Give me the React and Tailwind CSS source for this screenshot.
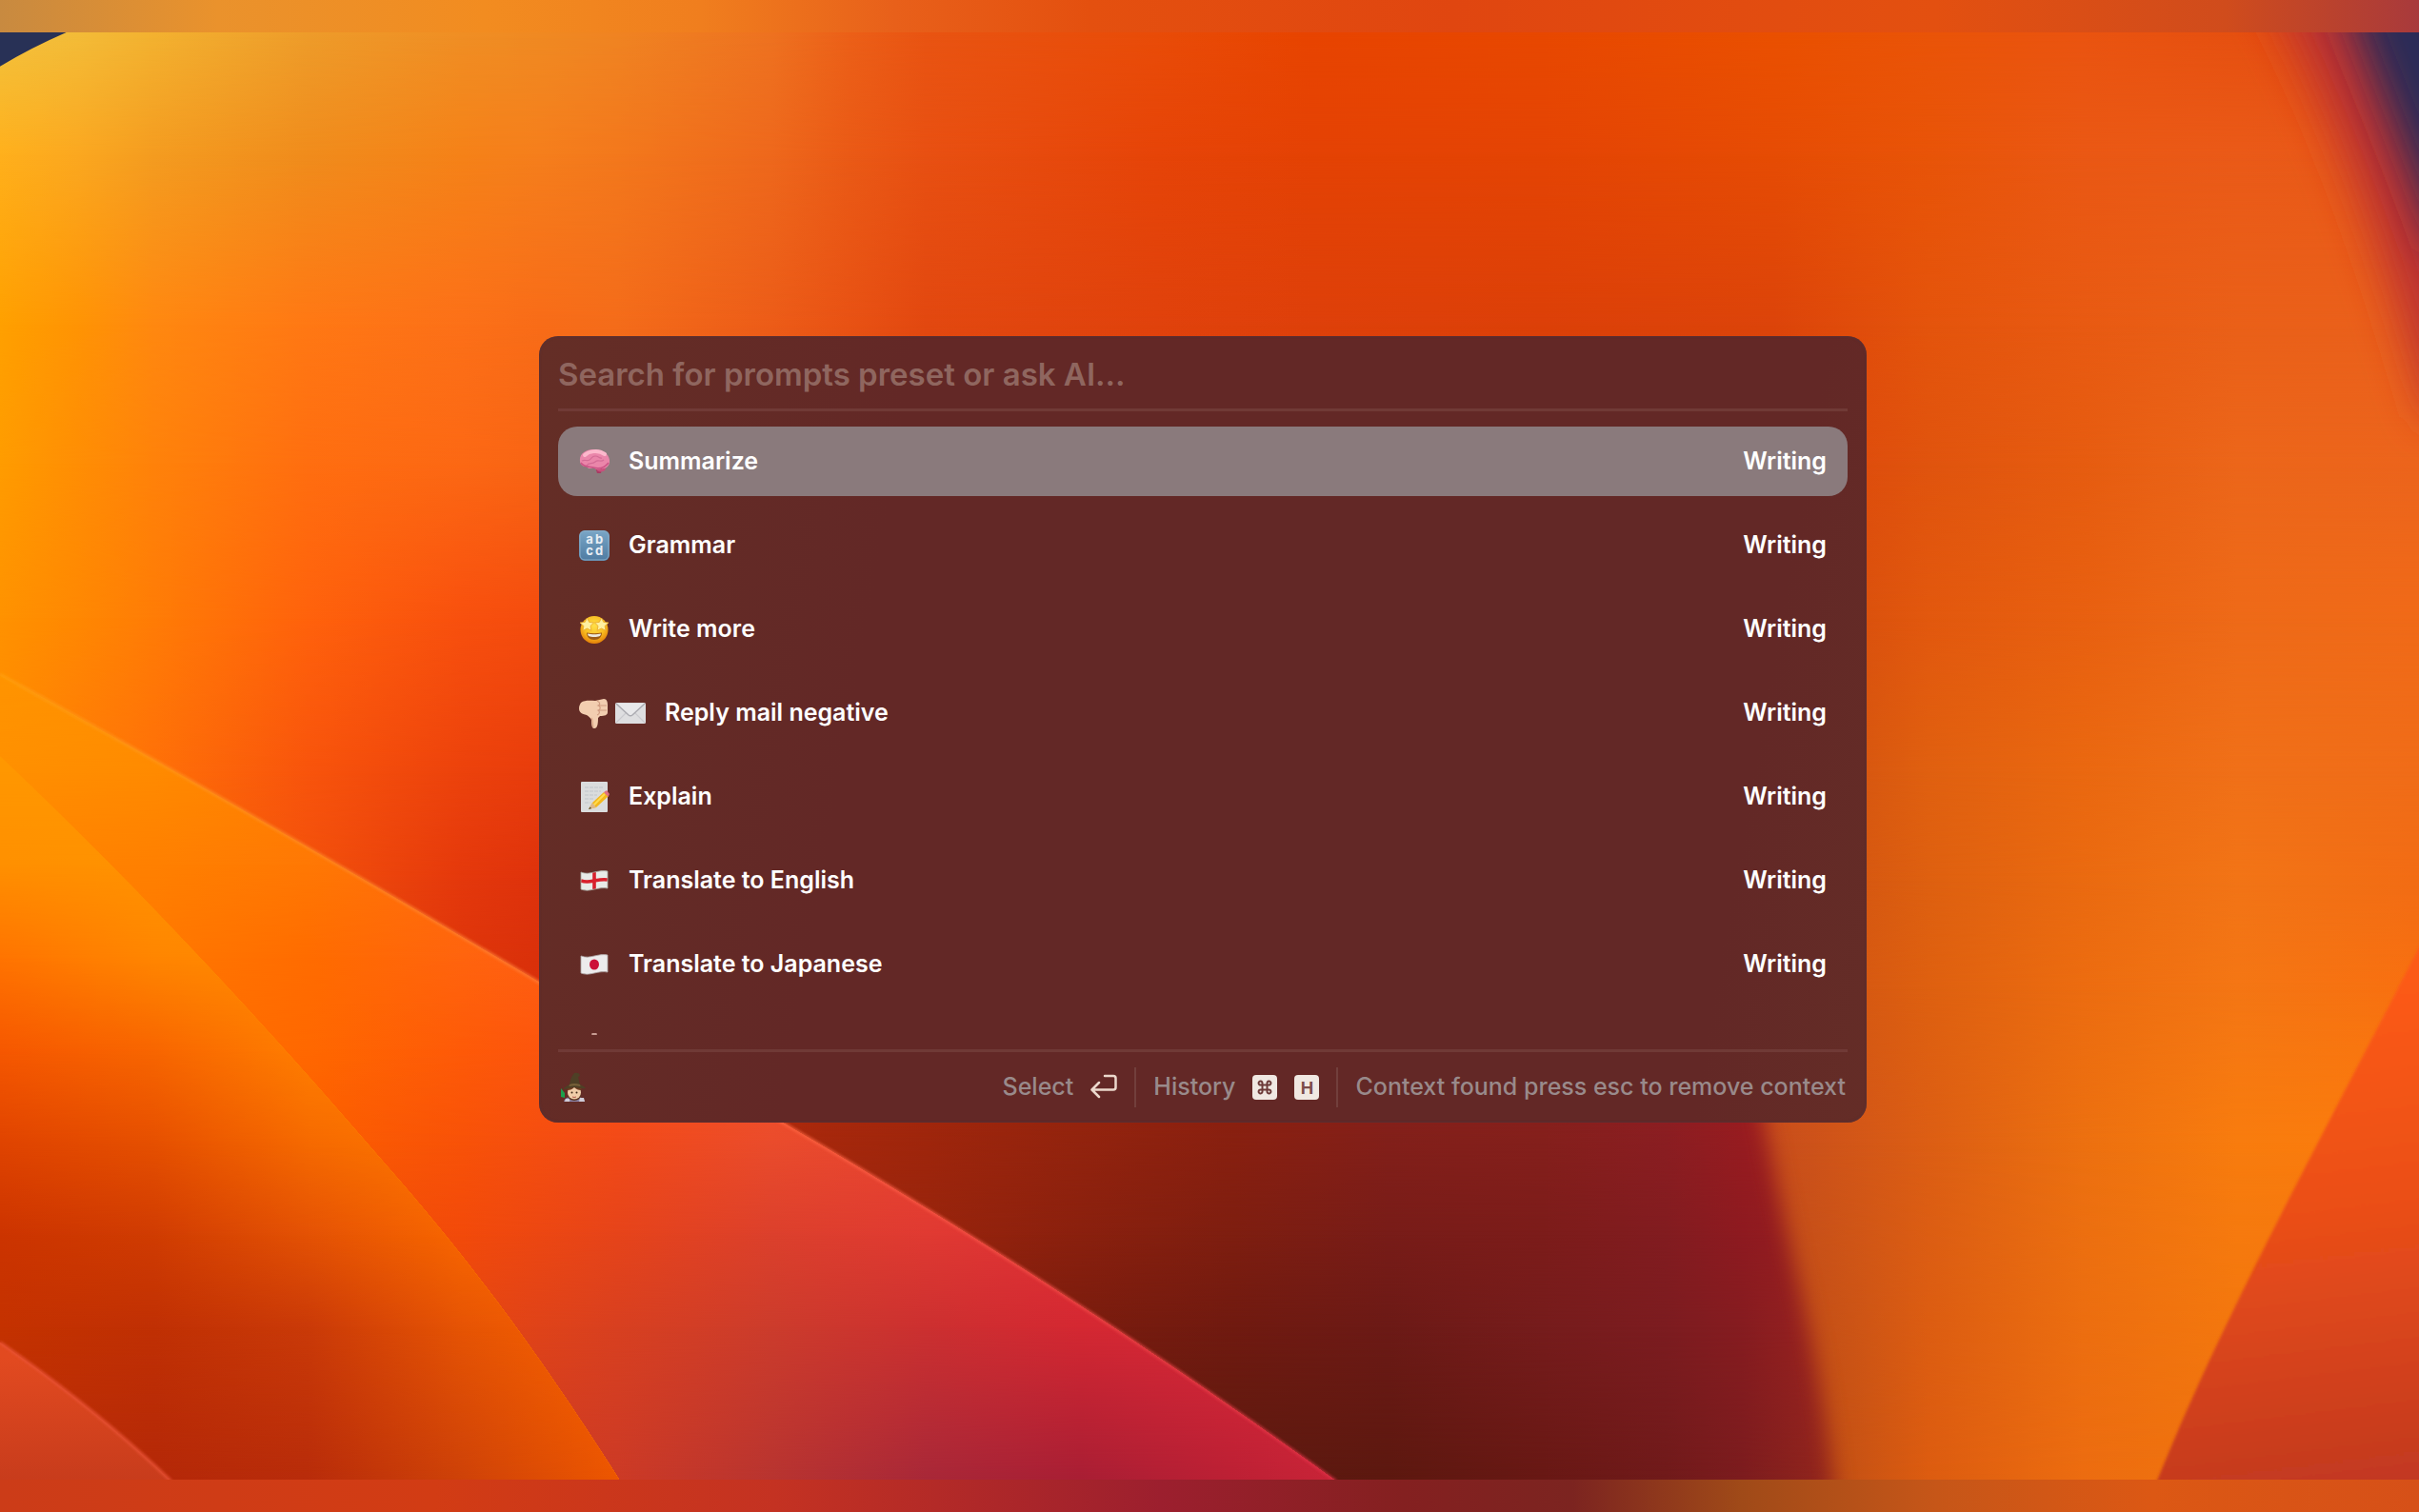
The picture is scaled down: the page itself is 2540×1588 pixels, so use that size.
import React, { useState } from "react";

// Wallpaper colours: each row is a horizontal gradient, rows blend from top to bottom
const SKY = {
  stops: [0, 50, 100, 200, 300, 350, 400, 500, 550, 600, 750, 850, 1000, 1150, 1250, 1350, 1450, 1568],
  rows: [
    { y: 21, colors: ["#f2c23e", "#f3bc38", "#f3b230", "#ee9c2a", "#f08e24", "#f08a22", "#f08422", "#ee7220", "#ec6018", "#e95412", "#e94c08", "#e84400", "#e84800", "#ea5000", "#ea5408", "#ea5410", "#e65010", "#e04a18"] },
    { y: 100, colors: ["#ffb01c", "#fba820", "#f49c20", "#f08c1c", "#f58218", "#f57e1c", "#f3781c", "#ee681c", "#ea5a16", "#e85012", "#e64408", "#e44204", "#e44404", "#e64c04", "#e85408", "#ea5814", "#ea5a18", "#e85818"] },
    { y: 210, colors: ["#ffa000", "#ff9404", "#ff8810", "#ff7814", "#fc7018", "#f86c18", "#f46c1a", "#ec5c18", "#e85214", "#e24810", "#e0420c", "#de400a", "#dc4008", "#dc440a", "#e4540c", "#e85a12", "#ea6018", "#ea601c"] },
    { y: 300, colors: ["#ff9c00", "#ff8e04", "#ff820a", "#ff6e10", "#fc6814", "#f86414", "#f26018", "#ec5814", "#e85012", "#e24810", "#e0420c", "#de400a", "#dc4008", "#dc440a", "#e0540e", "#e65c10", "#ec661a", "#ec641c"] },
    { y: 400, colors: ["#ff9200", "#ff8802", "#ff7c06", "#ff620c", "#f8500e", "#f44c0e", "#ec480e", "#e04010", "#dc3e0e", "#d83c0c", "#d03808", "#c83408", "#c83808", "#d0480c", "#e2580e", "#e86010", "#ee6a18", "#f06a18"] },
    { y: 500, colors: ["#ff8a00", "#ff7c06", "#ff7008", "#f8540c", "#ec420c", "#e83c0c", "#e0380c", "#cc300c", "#c82e0c", "#c02c0c", "#b02808", "#a82408", "#b02c10", "#cc4c10", "#e06010", "#ea6810", "#f07018", "#f06c18"] },
    { y: 570, colors: ["#ff8600", "#fc7408", "#fa6408", "#f2500c", "#e4380c", "#de320c", "#d8300c", "#c82e0c", "#c02c0c", "#b82c0c", "#a82408", "#a42410", "#a82814", "#cc4e12", "#de6010", "#ea6a10", "#f27416", "#f26c14"] },
    { y: 640, colors: ["#ff8000", "#f87008", "#f05008", "#e8440c", "#dc340a", "#d8300a", "#d0300a", "#c02c0c", "#b82c0c", "#b02a0c", "#a02408", "#a02410", "#a02814", "#cc5014", "#de6010", "#ec6c10", "#f47614", "#f87010"] },
    { y: 740, colors: ["#ff8000", "#f87008", "#f05008", "#e0400c", "#d4340a", "#cc300a", "#c8300a", "#b02c0c", "#a82a0c", "#a82a0c", "#982410", "#8c2018", "#902018", "#c84e1c", "#dc5e14", "#ec7010", "#f87c0e", "#fc7c0c"] },
    { y: 959, colors: ["#ff8000", "#f87008", "#f05008", "#e0400c", "#d4340a", "#cc300a", "#c8300a", "#b02c0c", "#a82a0c", "#a82a0c", "#601c10", "#601c10", "#701c18", "#b04818", "#dc5c10", "#ec6c10", "#f0740e", "#ec6c10"] },
  ],
};

const FOLD = {
  stops: [500, 600, 700, 800, 900, 1000, 1080, 1130, 1200],
  rows: [
    { y: 728, colors: ["#ac290c", "#a0260c", "#94240e", "#8a2010", "#84201a", "#86201c", "#8c1e22", "#981c20", "#a02020"] },
    { y: 800, colors: ["#a0260c", "#98240c", "#8a200e", "#7e1e10", "#781c18", "#7c1c1a", "#821c20", "#8e1a20", "#9c2020"] },
    { y: 860, colors: ["#8a200e", "#861e0e", "#7a1c0e", "#701a10", "#6c1a16", "#761c1c", "#7c1c20", "#861c20", "#a02420"] },
    { y: 959, colors: ["#601a10", "#601a10", "#5e1a10", "#5c1a10", "#5c180f", "#681814", "#701a1a", "#7c1c1e", "#98281c"] },
  ],
};

const LONG_PETAL = {
  stops: [0, 100, 200, 300, 400, 500, 600, 700, 800, 866],
  rows: [
    { y: 437, colors: ["#ff9400", "#ff9000", "#ff8400", "#ff7808", "#ff6c10", "#ff6018", "#f05030", "#f05030", "#f05030", "#f05030"] },
    { y: 500, colors: ["#ff9000", "#ff8a00", "#ff8000", "#ff7408", "#ff6810", "#fa5c18", "#f05030", "#f05030", "#f05030", "#f05030"] },
    { y: 560, colors: ["#ff8400", "#ff8000", "#ff7804", "#ff6c0c", "#ff6010", "#fa5820", "#f05030", "#f05030", "#f05030", "#f05030"] },
    { y: 620, colors: ["#ff7c00", "#ff7800", "#ff6c00", "#ff640e", "#fe5a16", "#f85424", "#f05030", "#e84834", "#e84834", "#e84834"] },
    { y: 680, colors: ["#ff7400", "#ff7000", "#ff6800", "#fe5a08", "#fa5012", "#f45028", "#ee4830", "#e84034", "#e03838", "#e03838"] },
    { y: 740, colors: ["#fc6800", "#fc6400", "#fc5e00", "#f85208", "#f24a18", "#ea4c2c", "#e84432", "#e03c34", "#e03438", "#e03438"] },
    { y: 800, colors: ["#f05008", "#f05008", "#f05008", "#f24a0a", "#e6441a", "#dc402c", "#e03a32", "#e03036", "#dc2c38", "#dc2c38"] },
    { y: 860, colors: ["#e84410", "#e84410", "#e84410", "#e64612", "#d84020", "#cc3c2c", "#cc3030", "#d42832", "#d82838", "#d82838"] },
    { y: 959, colors: ["#d03c20", "#d03c20", "#d03c20", "#d03c20", "#cc3a26", "#b83430", "#a82838", "#a81e34", "#bc2034", "#c82438"] },
  ],
};

const LOW_PETAL = {
  stops: [0, 100, 200, 300, 400],
  rows: [
    { y: 490, colors: ["#ff9800", "#ff9800", "#ff9000", "#ff8800", "#ff8000"] },
    { y: 560, colors: ["#ff9000", "#ff9200", "#ff8e00", "#ff8400", "#ff8000"] },
    { y: 620, colors: ["#ff7400", "#ff8600", "#ff8a00", "#ff8000", "#ff8000"] },
    { y: 680, colors: ["#f65800", "#f86600", "#ff7e00", "#ff7e00", "#ff7e00"] },
    { y: 740, colors: ["#e04400", "#e65000", "#f66a00", "#ff7800", "#ff7800"] },
    { y: 800, colors: ["#cc3400", "#d03c02", "#e45204", "#f86600", "#fc6c00"] },
    { y: 860, colors: ["#c43200", "#c03004", "#ca3a08", "#e65404", "#fa6400"] },
    { y: 959, colors: ["#b82c08", "#b42808", "#b82c0a", "#ce4208", "#ec5600"] },
  ],
};

const Mesh = ({ id, mesh }) => {
  const start = mesh.stops[0];
  const end = mesh.stops[mesh.stops.length - 1];

  return (
    <g>
      <defs>
        {mesh.rows.map((row, i) => (
          <linearGradient key={i} id={`${id}-row-${i}`} gradientUnits="userSpaceOnUse" x1={start} y1="0" x2={end} y2="0">
            {row.colors.map((color, c) => (
              <stop key={c} offset={(mesh.stops[c] - start) / (end - start)} stopColor={color} />
            ))}
          </linearGradient>
        ))}
        {mesh.rows.slice(1).map((row, i) => (
          <React.Fragment key={i}>
            <linearGradient id={`${id}-fade-${i + 1}`} gradientUnits="userSpaceOnUse" x1="0" y1={mesh.rows[i].y} x2="0" y2={row.y}>
              <stop offset="0" stopColor="#fff" stopOpacity="0" />
              <stop offset="1" stopColor="#fff" />
            </linearGradient>
            <mask id={`${id}-mask-${i + 1}`} maskUnits="userSpaceOnUse" x="0" y="0" width="1568" height="980">
              <rect y={mesh.rows[i].y} width="1568" height="980" fill={`url(#${id}-fade-${i + 1})`} />
            </mask>
          </React.Fragment>
        ))}
      </defs>
      {mesh.rows.map((row, i) => (
        <rect key={i} width="1568" height="980" fill={`url(#${id}-row-${i})`} mask={i ? `url(#${id}-mask-${i})` : undefined} />
      ))}
    </g>
  );
};

const Wallpaper = () => (
  <svg className="absolute inset-0 h-full w-full" viewBox="0 21 1568 938" preserveAspectRatio="none" aria-hidden="true">
    <defs>
      <filter id="soft1" x="-20%" y="-20%" width="140%" height="140%"><feGaussianBlur stdDeviation="1" /></filter>
      <filter id="soft7" x="-20%" y="-20%" width="140%" height="140%"><feGaussianBlur stdDeviation="7" /></filter>
      <filter id="soft14" x="-50%" y="-50%" width="200%" height="200%"><feGaussianBlur stdDeviation="14" /></filter>
      <linearGradient id="cornerPetal" gradientUnits="userSpaceOnUse" x1="0" y1="880" x2="0" y2="959">
        <stop offset="0" stopColor="#e24a20" />
        <stop offset="1" stopColor="#c83c1c" />
      </linearGradient>
      <linearGradient id="rightPetal" gradientUnits="userSpaceOnUse" x1="1520" y1="640" x2="1560" y2="959">
        <stop offset="0" stopColor="#fc5a14" />
        <stop offset="0.45" stopColor="#ea4e18" />
        <stop offset="1" stopColor="#c23820" />
      </linearGradient>
      <linearGradient id="rim" gradientUnits="userSpaceOnUse" x1="0" y1="437" x2="866" y2="959">
        <stop offset="0" stopColor="#ffa010" />
        <stop offset="0.35" stopColor="#ff8438" />
        <stop offset="0.65" stopColor="#ff6048" />
        <stop offset="1" stopColor="#e03048" />
      </linearGradient>
      <clipPath id="longClip"><path d="M0 437C120 503 240 572 350 637C410 671 460 699 508 728C620 793 750 876 866 960H402C340 862 290 800 245 749C180 674 100 585 0 490Z" /></clipPath>
      <clipPath id="lowClip"><path d="M0 490C100 585 180 674 245 749C290 800 340 862 402 960H0Z" /></clipPath>
      <mask id="foldMask" maskUnits="userSpaceOnUse" x="0" y="0" width="1568" height="980">
        <path d="M420 620H1118C1140 700 1149 760 1163 820C1175 870 1186 920 1197 1040H420Z" fill="#fff" filter="url(#soft7)" />
      </mask>
    </defs>

    <Mesh id="sky" mesh={SKY} />

    {/* dark corners */}
    <path d="M1468 -10C1512 70 1544 160 1576 270H1660V-10Z" fill="#bc3030" filter="url(#soft14)" />
    <path d="M1512 -20C1534 40 1556 90 1582 160H1660V-20Z" fill="#2c2c56" filter="url(#soft14)" />
    <path d="M0 21H43Q20 31 0 43Z" fill="#283156" />

    {/* dark fold below the panel */}
    <g mask="url(#foldMask)">
      <Mesh id="fold" mesh={FOLD} />
    </g>

    {/* petals on the left */}
    <g clipPath="url(#longClip)">
      <Mesh id="long" mesh={LONG_PETAL} />
    </g>
    <path d="M0 437C120 503 240 572 350 637C410 671 460 699 508 728C620 793 750 876 866 960" fill="none" stroke="url(#rim)" strokeWidth="1.8" opacity="0.8" filter="url(#soft1)" />
    <g clipPath="url(#lowClip)">
      <Mesh id="low" mesh={LOW_PETAL} />
    </g>
    <path d="M0 870Q62 913 111 960H0Z" fill="url(#cornerPetal)" />
    <path d="M0 870Q62 913 111 960" fill="none" stroke="#ec5438" strokeWidth="1.5" filter="url(#soft1)" />

    {/* right petal */}
    <path d="M1580 590C1545 660 1510 725 1470 804C1440 864 1418 910 1392 975H1580Z" fill="url(#rightPetal)" filter="url(#soft1)" />
  </svg>
);

const Brain = () => (
  <svg className="size-8" viewBox="0 0 32 32" aria-hidden="true">
    <path d="M17 22h7l-1 6h-4z" fill="#a83a62" />
    <ellipse cx="23" cy="23" rx="5" ry="3.5" fill="#c8507c" />
    <path d="M1 15C0 8 7 3 15 3c9 0 16 4 17 11 1 6-4 10-9 9-3 2-6 1-8-1-3 2-6 1-7-1-4 0-7-2-7-6z" fill="#ea86aa" />
    <path d="M6 9c4-4 14-6 21-1" stroke="#fcb8cc" strokeWidth="4" fill="none" strokeLinecap="round" />
    <path d="M3 15c4-2 5 1 8-1s2-4 6-4 4 3 7 2M8 20c2-4 6-1 9-4s6 1 9-2" stroke="#d46c96" strokeWidth="1.2" fill="none" />
    <path d="M2 17c3 5 10 4 13 5 6 2 12 0 16-5" stroke="#cc5486" strokeWidth="1.6" fill="none" />
  </svg>
);

const Letters = () => (
  <svg className="size-8" viewBox="0 0 32 32" aria-hidden="true">
    <defs>
      <linearGradient id="abcd" x1="0" y1="0" x2="0" y2="1">
        <stop offset="0" stopColor="#7aa6c6" />
        <stop offset="1" stopColor="#4e7ba2" />
      </linearGradient>
    </defs>
    <rect width="32" height="32" rx="6" fill="url(#abcd)" />
    <rect x="1" y="1" width="30" height="30" rx="5" fill="none" stroke="#86acc8" />
    <g fill="#e8eef4" fontFamily="Inter, sans-serif" fontWeight="700" fontSize="13" textAnchor="middle">
      <text x="11" y="14">a</text>
      <text x="21" y="14">b</text>
      <text x="11" y="26">c</text>
      <text x="21" y="26">d</text>
    </g>
  </svg>
);

const StarEyes = () => (
  <svg className="size-8" viewBox="0 0 32 32" aria-hidden="true">
    <defs>
      <radialGradient id="face" cx="0.5" cy="0.35" r="0.65">
        <stop offset="0" stopColor="#ffe048" />
        <stop offset="0.6" stopColor="#f8bc20" />
        <stop offset="1" stopColor="#e48008" />
      </radialGradient>
    </defs>
    <circle cx="16" cy="16.5" r="14.5" fill="url(#face)" />
    <path d="M8 19.500c5 1 11 1 16 0 0 4.500-3 7.500-8 7.500s-8-3-8-7.500z" fill="#9c5a14" />
    <path d="M9 20.500c4 1 10 1 14 0 0 2.500-2 3.500-7 3.500s-7-1-7-3.500z" fill="#ece8dc" />
    <path d="M8.500 4l2.200 4.400 4.800.6-3.500 3.400.9 4.900-4.400-2.300L4 17.300l.9-4.900L1 9l5.200-.6z" fill="#fff0a0" stroke="#e8a828" strokeWidth="0.8" />
    <path d="M23.500 4l-2.200 4.400-4.800.6 3.500 3.400-.9 4.900 4.400-2.300 4.500 2.300-.9-4.900L31 9l-5.200-.6z" fill="#fff0a0" stroke="#e8a828" strokeWidth="0.8" />
  </svg>
);

const ThumbDown = () => (
  <svg className="size-8" viewBox="0 0 32 32" aria-hidden="true">
    <path d="M2 5C6 2 12 3 17 3l9-2c3 0 4 3 4 6v8c0 3-3 4-8 4l-2 2c0 4 0 11-4 11-3 0-3-5-3-9-1-2-3-4-5-5-5-1-8-3-8-7 0-3 1-4 2-6z" fill="#f2ceb0" />
    <path d="M19 3c4 2 3 4 1 5 3 1 3 4 0 5 2 1 2 4-1 5M20 8h9M20 13h9" stroke="#d09c80" strokeWidth="1.2" fill="none" />
    <path d="M13 21c2 2 1 7 2 10" stroke="#dca888" strokeWidth="1.2" fill="none" />
  </svg>
);

const Mail = () => (
  <svg className="size-8" viewBox="0 0 32 32" aria-hidden="true">
    <rect y="5" width="32" height="22" rx="1.5" fill="#dedee0" />
    <path d="M1 26l11-11M31 26L20 15" stroke="#cacace" strokeWidth="1.2" />
    <path d="M1 6l13 12q2 1.600 4 0L31 6" fill="#e8e8ea" stroke="#aaaab0" strokeWidth="1.5" />
  </svg>
);

const Memo = () => (
  <svg className="size-8" viewBox="0 0 32 32" aria-hidden="true">
    <rect x="2" width="28" height="32" rx="1" fill="#dadcdd" />
    <path d="M6 6h19M6 10h17M6 14h13M6 18h9M6 22h6" stroke="#c0c6cc" strokeWidth="1.2" strokeDasharray="4 1" />
    <path d="M10 29l4-7L26 11l5 4-13 12z" fill="#f4b81c" />
    <path d="M15 25L27 13" stroke="#ffdc50" strokeWidth="2" />
    <path d="M26 11l3-2 3 4-1.500 3z" fill="#e07080" />
    <path d="M10 29l4-7 4 5z" fill="#dcb88c" />
    <path d="M10 29l1.500-2.600 1.600 1.600z" fill="#443" />
  </svg>
);

const FLAG_PATH = "M2 7c6 2 9 1 14 0s9-2 14-1v18c-5-1-9 0-14 1s-8 2-14 0z";

const EnglandFlag = () => (
  <svg className="size-8" viewBox="0 0 32 32" aria-hidden="true">
    <path d={FLAG_PATH} fill="#e8ebe8" />
    <path d="M16 7v18M2 16c6 2 9 1 14 0s9-2 14-1" stroke="#d8202c" strokeWidth="3.6" fill="none" />
    <path d={FLAG_PATH} fill="none" stroke="#a8a8a0" strokeWidth="0.8" />
  </svg>
);

const JapanFlag = () => (
  <svg className="size-8" viewBox="0 0 32 32" aria-hidden="true">
    <path d={FLAG_PATH} fill="#ecebec" />
    <ellipse cx="16" cy="16" rx="5" ry="5.5" fill="#cc1038" />
    <path d={FLAG_PATH} fill="none" stroke="#b0a8a8" strokeWidth="0.8" />
  </svg>
);

const Pin = () => (
  <svg className="size-8" viewBox="0 0 32 32" aria-hidden="true">
    <path d="M13.500 0h5l3 15 4 16H6l5-16z" fill="#c89c92" />
  </svg>
);

const Mage = () => (
  <svg className="size-8" viewBox="0 0 32 32" aria-hidden="true">
    <path d="M6 31c1-4 4-5 11-5s10 1 11 5z" fill="#8c84a8" />
    <path d="M10 16h14v8c0 3-3 6-7 6s-7-3-7-6z" fill="#5a3420" />
    <circle cx="17" cy="21.500" r="7" fill="#f0cca8" />
    <path d="M10 19c3 0 5-1 7-3 2 2 4 3 7 3l1-4H9z" fill="#6c3c20" />
    <path d="M5 18c3-3 5-4 7-5 1-5 2-9 5-12 3-1 6 0 6 3l-2 1c1 3 1 6 2 8 2 1 5 2 6 4-5 1-8-1-12-1s-7 2-12 2z" fill="#4e4026" />
    <path d="M12 13c3-1.500 7-1.500 11 0l.5 2c-4-1-8-1-12 0z" fill="#756038" />
    <circle cx="14.500" cy="21.500" r="1" fill="#402818" />
    <circle cx="19.500" cy="21.500" r="1" fill="#402818" />
    <path d="M15 26q2 1 4 0" stroke="#b05848" fill="none" />
    <path d="M3 17l4 5v5l-4-1z" fill="#1ca04c" />
    <path d="M23 27h4l1 4h-6z" fill="#d0ccd8" />
    <path d="M8 28h4v3H7z" fill="#d0ccd8" />
  </svg>
);

const ReturnIcon = () => (
  <svg className="size-7" viewBox="0 0 28 28" fill="none" stroke="#ecd8cc" strokeWidth="2.5" strokeLinecap="round" strokeLinejoin="round" aria-hidden="true">
    <path d="M15 2h9q2.500 0 2.500 2.500V14q0 2.500-2.500 2.500H2M9 9l-7.500 7.500L9 24" />
  </svg>
);

const CommandKey = () => (
  <svg className="size-[26px]" viewBox="0 0 26 26" aria-hidden="true">
    <rect width="26" height="26" rx="4" fill="#f0e8e2" />
    <path d="M10.500 10.500h5v5h-5zM10.500 10.500H9a2 2 0 1 1 1.500-1.500zM15.500 10.500V9a2 2 0 1 1 1.500 1.500zM15.500 15.500H17a2 2 0 1 1-1.500 1.500zM10.500 15.500V17A2 2 0 1 1 9 15.500z" fill="none" stroke="#6c3a38" strokeWidth="2" />
  </svg>
);

const prompts = [
  { id: 1, icons: [Brain], title: "Summarize", category: "Writing" },
  { id: 2, icons: [Letters], title: "Grammar", category: "Writing" },
  { id: 3, icons: [StarEyes], title: "Write more", category: "Writing" },
  { id: 4, icons: [ThumbDown, Mail], title: "Reply mail negative", category: "Writing" },
  { id: 5, icons: [Memo], title: "Explain", category: "Writing" },
  { id: 6, icons: [EnglandFlag], title: "Translate to English", category: "Writing" },
  { id: 7, icons: [JapanFlag], title: "Translate to Japanese", category: "Writing" },
  { id: 8, icons: [Pin], title: "", category: "" },
];

const App = () => {
  const [query, setQuery] = useState("");
  const [selected, setSelected] = useState(1);

  const filtered = prompts.filter((p) => p.title.toLowerCase().includes(query.toLowerCase()));

  return (
    <div className="flex min-h-screen flex-col font-['Inter',sans-serif]">
      <div className="h-[34px] bg-[linear-gradient(90deg,#c88a40_0%,#ea922c_9%,#f28c20_20%,#f07e1e_29%,#e8601a_37%,#e4500f_45%,#e04610_60%,#e35010_80%,#d04c1c_92%,#a83a3c_100%)]" />

      <main className="relative flex-1 overflow-hidden pt-[319px] pr-3.5">
        <Wallpaper />

        {/* Launcher */}
        <section className="relative mx-auto w-full max-w-[1394px] rounded-[20px] bg-[linear-gradient(100deg,#642e26_0%,#632826_26%,#632826_88%,#642d27_100%)] px-5 shadow-[inset_0_0_2px_1px_rgba(80,50,60,0.6)]">
          <input
            type="text"
            aria-label="Search prompts"
            placeholder="Search for prompts preset or ask AI..."
            value={query}
            onChange={(e) => setQuery(e.target.value)}
            className="block h-[76px] w-full bg-transparent pt-1 text-[33px] font-semibold text-white outline-none placeholder:text-[#8f665f]"
          />
          <div className="h-[3px] bg-[#703a36]" />

          <ul className="mt-4 flex max-h-[639px] flex-col gap-[15px] overflow-hidden">
            {filtered.map((p) => (
              <li key={p.id} className="shrink-0">
                <button
                  type="button"
                  onClick={() => setSelected(p.id)}
                  className={`flex h-[73px] w-full items-center rounded-[20px] px-[22px] text-[25px] font-semibold text-white ${
                    selected === p.id ? "bg-[#8a7a7c]" : ""
                  }`}
                >
                  <span className="flex gap-1.5">
                    {p.icons.map((Icon, i) => (
                      <Icon key={i} />
                    ))}
                  </span>
                  <span className="ml-5">{p.title}</span>
                  <span className="ml-auto">{p.category}</span>
                </button>
              </li>
            ))}
          </ul>

          {/* Footer */}
          <div className="mt-[15px] h-[3px] bg-[#703a36]" />
          <footer className="flex h-[74px] items-center gap-[18px] pr-0.5 text-[25px] font-medium text-[#998a8b]">
            <Mage />
            <button type="button" className="ml-auto flex items-center gap-[18px]">
              Select
              <ReturnIcon />
            </button>
            <div className="h-[42px] w-0.5 bg-[#723f3c]" />
            <button type="button" className="flex items-center gap-[18px]">
              History
              <CommandKey />
              <kbd className="flex size-[26px] items-center justify-center rounded bg-[#f0e8e2] font-['Inter',sans-serif] text-[18px] font-bold text-[#7c4c4a]">
                H
              </kbd>
            </button>
            <div className="h-[42px] w-0.5 bg-[#723f3c]" />
            <span>Context found press esc to remove context</span>
          </footer>
        </section>
      </main>

      <div className="h-[34px] bg-[linear-gradient(90deg,#cc3c18_0%,#d23c14_18%,#c43222_32%,#9c1f2e_48%,#842020_58%,#7c2420_65%,#a04a18_72%,#c65618_80%,#dc5814_89%,#d65018_100%)]" />
    </div>
  );
};

export default App;
